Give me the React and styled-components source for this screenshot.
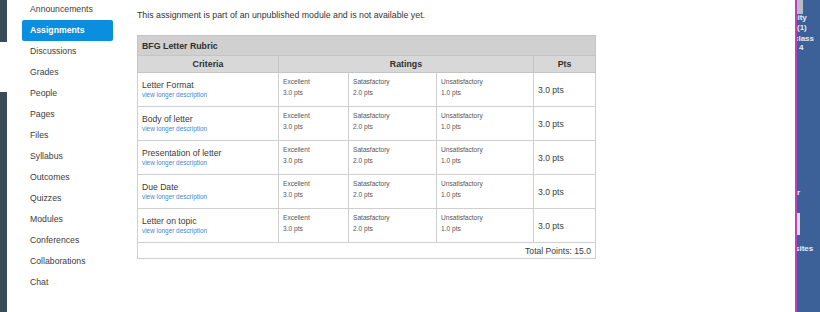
import React from "react";
import styled, { createGlobalStyle } from "styled-components";

const Global = createGlobalStyle`
  html, body { margin: 0; padding: 0; background: #fff; }
  body { font-family: "Liberation Sans", Arial, sans-serif; color: #333; }
  * { box-sizing: border-box; }
`;

const Page = styled.div`
  display: flex;
  height: 312px;
  width: 820px;
  overflow: hidden;
`;

const Rail = styled.div`
  width: 7px;
  display: flex;
  flex-direction: column;
`;

const RailBlock = styled.div`
  background: #394b58;
  height: ${(p) => (p.$h ? `${p.$h}px` : "auto")};
  flex: ${(p) => (p.$grow ? 1 : "none")};
`;

const RailGap = styled.div`
  height: ${(p) => p.$h}px;
`;

const Nav = styled.nav`
  width: 130px;
  padding: 0 0 0 15px;
  display: flex;
  flex-direction: column;
  margin-top: -1px;
`;

const NavItem = styled.div`
  height: 21px;
  line-height: 21px;
  font-size: 8.7px;
  padding-left: 8px;
  width: 91px;
  border-radius: 2px;
  color: ${(p) => (p.$active ? "#fff" : "#3d3d3d")};
  background: ${(p) => (p.$active ? "#0a8fe0" : "transparent")};
  font-weight: ${(p) => (p.$active ? 700 : 400)};
`;

const Main = styled.main`
  flex: 1;
  padding: 10px 0 0 0;
`;

const Notice = styled.p`
  margin: 0 0 15px 0;
  font-size: 8.8px;
  color: #333;
  line-height: 10px;
`;

const Table = styled.table`
  border-collapse: collapse;
  width: 458px;
  table-layout: fixed;
  font-size: 8.6px;
  border: 1px solid #c4c4c4;
`;

const TitleCell = styled.th`
  background: #d0d0d0;
  text-align: left;
  font-weight: 700;
  font-size: 8.8px;
  height: 20px;
  padding: 0 4px;
  border: 1px solid #c4c4c4;
  color: #2f2f2f;
`;

const HeadCell = styled.th`
  background: #d8d8d8;
  text-align: center;
  font-weight: 700;
  font-size: 8.8px;
  height: 17px;
  padding: 0;
  border: 1px solid #c4c4c4;
  color: #2f2f2f;
`;

const CriterionCell = styled.td`
  height: 34px;
  padding: 0 4px;
  border: 1px solid #cfcfcf;
  vertical-align: middle;
`;

const CritName = styled.div`
  font-size: 8.6px;
  color: #3a3a3a;
  line-height: 10px;
`;

const CritLink = styled.a`
  display: block;
  font-size: 6.4px;
  color: #3c8ad0;
  text-decoration: none;
  line-height: 9px;
`;

const RatingCell = styled.td`
  padding: 3px 4px 0 4px;
  border: 1px solid #cfcfcf;
  vertical-align: top;
  font-size: 6.6px;
  color: #555;
  line-height: 11px;
`;

const PtsCell = styled.td`
  padding: 0 4px;
  border: 1px solid #cfcfcf;
  vertical-align: middle;
  font-size: 8.6px;
  color: #3a3a3a;
`;

const TotalCell = styled.td`
  height: 16px;
  padding: 0 4px;
  text-align: right;
  font-size: 8.6px;
  color: #3a3a3a;
  border: 1px solid #cfcfcf;
`;

const Side = styled.div`
  width: 25px;
  display: flex;
  flex-direction: column;
  background: #3b6198;
  border-left: 2px solid #c03cc4;
  overflow: hidden;
`;

const SideTop = styled.div`
  width: 6px;
  height: 14px;
  background: #b8bcc4;
  margin-bottom: 0;
`;

const SideText = styled.div`
  color: #e6ebf3;
  font-weight: 700;
  font-size: 8px;
  line-height: 10px;
  white-space: nowrap;
  margin-left: ${(p) => p.$shift}px;
  margin-top: ${(p) => p.$top || 0}px;
`;

const SideBar = styled.div`
  width: 3px;
  height: 22px;
  background: #d9dde4;
  margin-top: ${(p) => p.$top}px;
`;

const navItems = [
  "Announcements",
  "Assignments",
  "Discussions",
  "Grades",
  "People",
  "Pages",
  "Files",
  "Syllabus",
  "Outcomes",
  "Quizzes",
  "Modules",
  "Conferences",
  "Collaborations",
  "Chat",
];

const criteria = [
  "Letter Format",
  "Body of letter",
  "Presentation of letter",
  "Due Date",
  "Letter on topic",
];

const ratings = [
  ["Excellent", "3.0 pts"],
  ["Satasfactory", "2.0 pts"],
  ["Unsatisfactory", "1.0 pts"],
];

export default function App() {
  return (
    <>
      <Global />
      <Page>
        <Rail>
          <RailBlock $h={42} />
          <RailGap $h={50} />
          <RailBlock $grow />
        </Rail>
        <Nav>
          {navItems.map((n) => (
            <NavItem key={n} $active={n === "Assignments"}>
              {n}
            </NavItem>
          ))}
        </Nav>
        <Main>
          <Notice>
            This assignment is part of an unpublished module and is not available yet.
          </Notice>
          <Table>
            <colgroup>
              <col style={{ width: 141 }} />
              <col style={{ width: 70 }} />
              <col style={{ width: 88 }} />
              <col style={{ width: 97 }} />
              <col style={{ width: 62 }} />
            </colgroup>
            <thead>
              <tr>
                <TitleCell colSpan={5}>BFG Letter Rubric</TitleCell>
              </tr>
              <tr>
                <HeadCell>Criteria</HeadCell>
                <HeadCell colSpan={3}>Ratings</HeadCell>
                <HeadCell>Pts</HeadCell>
              </tr>
            </thead>
            <tbody>
              {criteria.map((c) => (
                <tr key={c}>
                  <CriterionCell>
                    <CritName>{c}</CritName>
                    <CritLink href="#">view longer description</CritLink>
                  </CriterionCell>
                  {ratings.map(([label, pts]) => (
                    <RatingCell key={label}>
                      {label}
                      <br />
                      {pts}
                    </RatingCell>
                  ))}
                  <PtsCell>3.0 pts</PtsCell>
                </tr>
              ))}
              <tr>
                <TotalCell colSpan={5}>Total Points: 15.0</TotalCell>
              </tr>
            </tbody>
          </Table>
        </Main>
        <Side>
          <SideTop />
          <SideText $shift={-4} $top={-1}>city</SideText>
          <SideText $shift={0}>(1)</SideText>
          <SideText $shift={-3} $top={1}>class</SideText>
          <SideText $shift={2} $top={-1}>4</SideText>
          <SideText $shift={-5} $top={135}>ur</SideText>
          <SideBar $top={15} />
          <SideText $shift={-2} $top={9}>sites</SideText>
        </Side>
      </Page>
    </>
  );
}
